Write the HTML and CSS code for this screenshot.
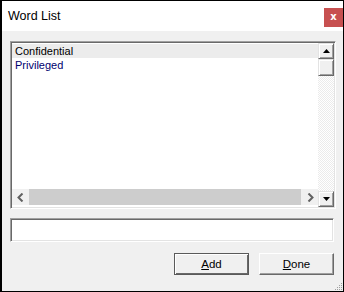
FILE: index.html
```html
<!DOCTYPE html>
<html>
<head>
<meta charset="utf-8">
<link rel="stylesheet" href="styles.css">
</head>
<body>
<div class="window">
  <div class="titlebar">
    <span class="title">Word List</span>
    <span class="close">x</span>
  </div>
  <div class="content">
    <div class="listbox">
      <div class="list-main">
        <div class="items">
          <div class="item selected">Confidential</div>
          <div class="item blue">Privileged</div>
        </div>
        <div class="hscroll">
          <span class="harrow">
            <svg width="8" height="9" viewBox="0 0 8 9"><path d="M5.5 0.5 L1.5 4.5 L5.5 8.5" fill="none" stroke="#606060" stroke-width="2"/></svg>
          </span>
          <span class="hthumb"></span>
          <span class="harrow">
            <svg width="8" height="9" viewBox="0 0 8 9"><path d="M2.5 0.5 L6.5 4.5 L2.5 8.5" fill="none" stroke="#606060" stroke-width="2"/></svg>
          </span>
        </div>
      </div>
      <div class="vscroll">
        <span class="vbtn"><svg width="7" height="4" viewBox="0 0 7 4"><path d="M3.5 0 L7 4 L0 4 Z" fill="#000"/></svg></span>
        <span class="vbtn thumb"></span>
        <span class="vtrack"></span>
        <span class="vbtn"><svg width="7" height="4" viewBox="0 0 7 4"><path d="M0 0 L7 0 L3.5 4 Z" fill="#000"/></svg></span>
      </div>
    </div>
    <div class="textbox"></div>
    <div class="buttons">
      <button class="btn default"><u>A</u>dd</button>
      <button class="btn"><u>D</u>one</button>
    </div>
  </div>
  <svg class="grip" width="9" height="9" viewBox="0 0 9 9">
    <g fill="#a0a0a0">
      <rect x="7" y="1" width="1" height="1"/>
      <rect x="5" y="3" width="1" height="1"/><rect x="7" y="3" width="1" height="1"/>
      <rect x="3" y="5" width="1" height="1"/><rect x="5" y="5" width="1" height="1"/><rect x="7" y="5" width="1" height="1"/>
      <rect x="1" y="7" width="1" height="1"/><rect x="3" y="7" width="1" height="1"/><rect x="5" y="7" width="1" height="1"/><rect x="7" y="7" width="1" height="1"/>
    </g>
  </svg>
</div>
</body>
</html>
```
FILE: styles.css
```css
* { box-sizing: border-box; }
html, body { margin: 0; padding: 0; background: #f0f0f0; }
body { font-family: "Liberation Sans", Arial, sans-serif; }
.window {
  position: relative;
  width: 344px;
  height: 292px;
  border: 1px solid #000;
  border-left-width: 2px;
  background: #f0f0f0;
  display: flex;
  flex-direction: column;
}
.titlebar {
  height: 30px;
  background: #fff;
  display: flex;
  align-items: flex-start;
  justify-content: space-between;
  flex: none;
}
.title {
  font-size: 12.5px;
  color: #000;
  margin: 8px 0 0 6px;
}
.close {
  width: 19px;
  height: 19px;
  margin-top: 7px;
  background: #c75050;
  color: #fff;
  font-family: "DejaVu Sans", sans-serif;
  font-weight: bold;
  font-size: 10px;
  line-height: 18px;
  text-align: center;
}
.content {
  padding: 10px 8px 0 8px;
  display: flex;
  flex-direction: column;
}
.listbox {
  height: 168px;
  width: 326px;
  display: flex;
  border-style: solid;
  border-width: 1px;
  border-color: #a0a0a0 #fff #fff #a0a0a0;
  box-shadow: inset 1px 1px 0 #696969, inset -1px -1px 0 #e3e3e3;
  padding: 1px 1px 1px 1px;
  background: #fff;
}
.list-main {
  flex: 1;
  display: flex;
  flex-direction: column;
}
.items {
  flex: 1;
  padding-top: 1px;
  font-size: 11px;
}
.item {
  height: 14px;
  line-height: 14px;
  padding-left: 3px;
}
.item.selected { background: #ececec; color: #000; }
.item.blue { color: #00006e; }
.hscroll {
  height: 16px;
  margin-bottom: 2px;
  background: #f0f0f0;
  display: flex;
  align-items: stretch;
}
.harrow {
  width: 17px;
  display: flex;
  align-items: center;
  justify-content: center;
}
.hthumb {
  flex: 1;
  background: #cdcdcd;
}
.vscroll {
  width: 16px;
  display: flex;
  flex-direction: column;
}
.vbtn {
  height: 16px;
  background: #f0f0f0;
  border-style: solid;
  border-width: 1px;
  border-color: #e3e3e3 #696969 #696969 #e3e3e3;
  box-shadow: inset 1px 1px 0 #fff, inset -1px -1px 0 #a0a0a0;
  display: flex;
  align-items: center;
  justify-content: center;
  flex: none;
}
.vbtn.thumb { height: 17px; }
.vtrack {
  flex: 1;
  background: repeating-conic-gradient(#fff 0 25%, #ebebeb 0 50%) 0 0 / 2px 2px;
}
.textbox {
  margin-top: 9px;
  width: 324px;
  height: 24px;
  background: #fff;
  border-style: solid;
  border-width: 1px;
  border-color: #a0a0a0 #fff #fff #a0a0a0;
  box-shadow: inset 1px 1px 0 #696969, inset -1px -1px 0 #e3e3e3;
}
.buttons {
  margin-top: 11px;
  display: flex;
  justify-content: flex-end;
  gap: 10px;
  padding-right: 0;
  width: 324px;
}
.btn {
  width: 75px;
  height: 22px;
  padding: 0;
  margin: 0;
  font-family: "Liberation Sans", Arial, sans-serif;
  font-size: 11.5px;
  color: #000;
  background: #f0f0f0;
  border-style: solid;
  border-width: 1px;
  border-color: #fff #696969 #696969 #fff;
  box-shadow: inset -1px -1px 0 #a0a0a0;
}
.btn.default {
  border-color: #5a5a5a;
  box-shadow: inset 1px 1px 0 #fff, inset -1px -1px 0 #696969;
}
.btn u { text-underline-offset: 1px; }
.grip {
  position: absolute;
  right: 0;
  bottom: 0;
}
```
